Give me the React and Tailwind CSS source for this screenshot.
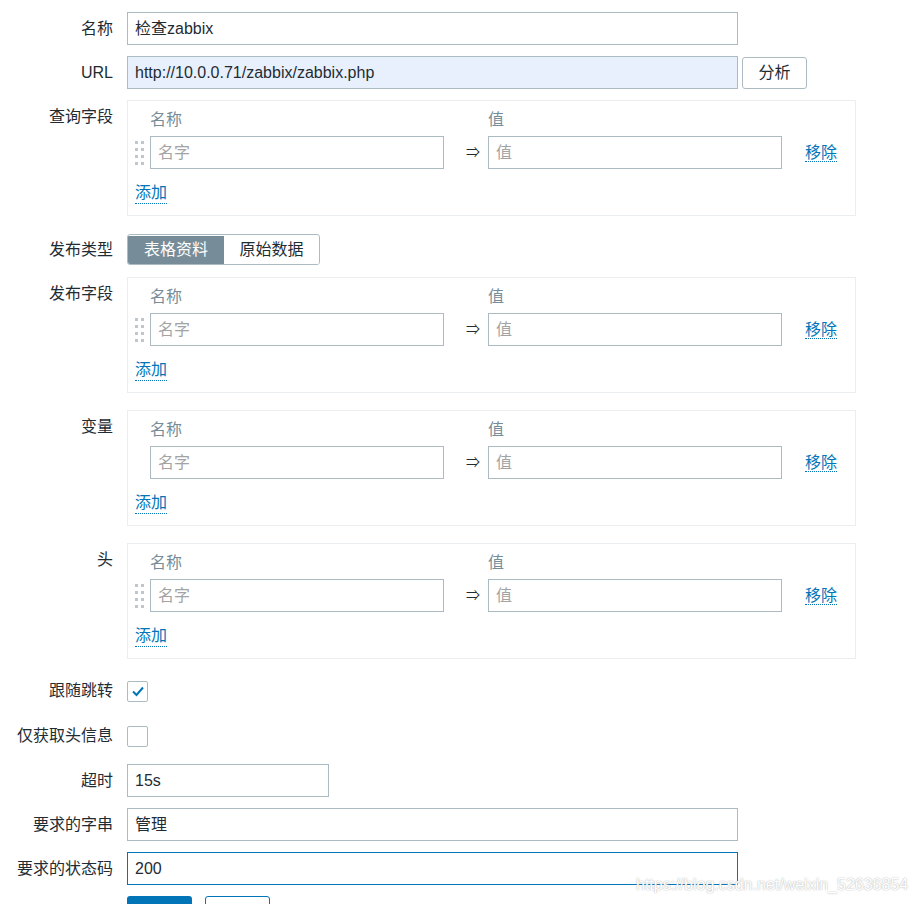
import React from "react";

const FONT = { fontFamily: '"Liberation Sans", Arial, "Noto Sans CJK SC", sans-serif' };

function Label({ children, top = false }) {
  return (
    <div
      className={`w-[113px] shrink-0 text-right text-[16px] leading-[22px] text-[#1f2c33] ${top ? "pt-[6px]" : "self-center"}`}
    >
      {children}
    </div>
  );
}

function Row({ label, top, className = "", children }) {
  return (
    <div className={`flex ${className}`}>
      <Label top={top}>{label}</Label>
      <div className="ml-[14px] flex items-center">{children}</div>
    </div>
  );
}

function TextInput({ value, width, variant = "plain" }) {
  const cls =
    variant === "autofill"
      ? "border-[#acbbc2] bg-[#e8f0fe]"
      : variant === "focus"
      ? "border-[#0275b8] bg-white"
      : "border-[#acbbc2] bg-white";
  return (
    <div
      className={`flex h-[33px] items-center border px-[7px] pt-[1px] text-[16px] text-[#1f2c33] ${cls}`}
      style={{ width }}
    >
      {value}
    </div>
  );
}

function Handle() {
  return (
    <div className="grid w-[9px] grid-cols-2 gap-x-[3px] gap-y-[4px]">
      {Array.from({ length: 8 }).map((_, i) => (
        <div key={i} className="h-[3px] w-[3px] bg-[#bfc7cc]" />
      ))}
    </div>
  );
}

function LinkText({ children }) {
  return (
    <span className="border-b border-dotted border-[#0275b8] text-[16px] leading-[20px] text-[#0275b8]">
      {children}
    </span>
  );
}

function PairBox({ handle = true }) {
  return (
    <div className="flex h-[116px] w-[729px] flex-col border border-[#ebeef0] bg-white pl-[7px] pt-[8px]">
      <div className="flex h-[22px] text-[16px] leading-[22px] text-[#768d99]">
        <div className="ml-[15px] w-[338px]">名称</div>
        <div>值</div>
      </div>
      <div className="mt-[5px] flex h-[33px] items-center">
        <div className="flex w-[15px] items-center">{handle && <Handle />}</div>
        <div className="flex h-[33px] w-[294px] items-center border border-[#acbbc2] px-[7px] pt-[1px] text-[16px] text-[#a3a3a3]">
          名字
        </div>
        <div className="flex w-[44px] justify-end pr-[8px] text-[14px] text-[#1f2c33]">⇒</div>
        <div className="flex h-[33px] w-[294px] items-center border border-[#acbbc2] px-[7px] pt-[1px] text-[16px] text-[#a3a3a3]">
          值
        </div>
        <div className="ml-[23px]">
          <LinkText>移除</LinkText>
        </div>
      </div>
      <div className="mt-[13px] flex h-[22px] items-center">
        <LinkText>添加</LinkText>
      </div>
    </div>
  );
}

function Checkbox({ checked }) {
  return (
    <div className="flex h-[21px] w-[21px] items-center justify-center rounded-[2px] border border-[#acbbc2] bg-white">
      {checked && (
        <svg width="14" height="12" viewBox="0 0 14 12">
          <polyline points="2,6.5 5.5,10 12,2.5" fill="none" stroke="#0275b8" strokeWidth="2" />
        </svg>
      )}
    </div>
  );
}

export default function App() {
  return (
    <div className="relative h-[904px] w-[916px] overflow-hidden bg-white" style={FONT}>
      <div className="flex flex-col pt-[12px]">
        <Row label="名称">
          <TextInput value="检查zabbix" width={611} />
        </Row>
        <Row label="URL" className="mt-[11px]">
          <TextInput value="http://10.0.0.71/zabbix/zabbix.php" width={611} variant="autofill" />
          <div className="ml-[4px] flex h-[32px] w-[65px] items-center justify-center rounded-[3px] border border-[#acbbc2] bg-white pt-[1px] text-[16px] text-[#1f2c33]">
            分析
          </div>
        </Row>
        <Row label="查询字段" top className="mt-[11px]">
          <PairBox />
        </Row>
        <Row label="发布类型" className="mt-[18px]">
          <div className="flex h-[31px] w-[193px] overflow-hidden rounded-[3px] border border-[#acbbc2] pt-[1px] text-[16px]">
            <div className="flex w-[96px] items-center justify-center bg-[#768d99] text-white">表格资料</div>
            <div className="flex flex-1 items-center justify-center bg-white text-[#1f2c33]">原始数据</div>
          </div>
        </Row>
        <Row label="发布字段" top className="mt-[12px]">
          <PairBox />
        </Row>
        <Row label="变量" top className="mt-[17px]">
          <PairBox handle={false} />
        </Row>
        <Row label="头" top className="mt-[17px]">
          <PairBox />
        </Row>
        <Row label="跟随跳转" className="mt-[16px] h-[32px]">
          <Checkbox checked />
        </Row>
        <Row label="仅获取头信息" className="mt-[13px] h-[32px]">
          <Checkbox />
        </Row>
        <Row label="超时" className="mt-[12px]">
          <TextInput value="15s" width={202} />
        </Row>
        <Row label="要求的字串" className="mt-[11px]">
          <TextInput value="管理" width={611} />
        </Row>
        <Row label="要求的状态码" className="mt-[11px]">
          <TextInput value="200" width={611} variant="focus" />
        </Row>
        <Row label="" className="mt-[11px]">
          <div className="flex gap-[13px]">
            <div className="h-[32px] w-[65px] rounded-[3px] bg-[#0275b8]" />
            <div className="h-[32px] w-[65px] rounded-[3px] border border-[#0275b8] bg-white" />
          </div>
        </Row>
      </div>
      <div className="absolute left-[636px] top-[875px] text-[16px] leading-[20px] text-white [text-shadow:0_0_1.5px_#9a9a9a]">
        https://blog.csdn.net/weixin_52636854
      </div>
    </div>
  );
}
